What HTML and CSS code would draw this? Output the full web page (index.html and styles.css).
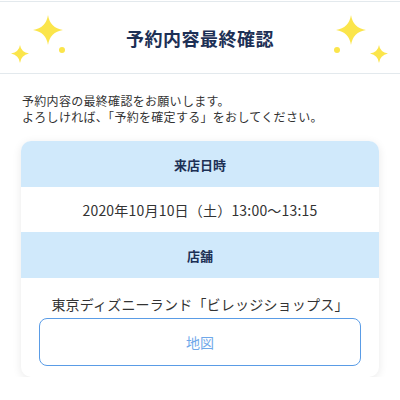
FILE: index.html
```html
<!DOCTYPE html>
<html lang="ja">
<head>
    <meta charset="UTF-8">
    <meta name="viewport" content="width=device-width, initial-scale=1.0">
    <title>予約内容最終確認</title>
    <link rel="stylesheet" href="styles.css">
</head>
<body>

    <header class="page-head">
        <!-- sparkles on the left -->
        <svg class="sparkle sparkle-left" width="80" height="70" viewBox="0 0 80 70">
            <path d="M48,13 Q50,26 63,28 Q50,30 48,43 Q46,30 33,28 Q46,26 48,13 Z"/>
            <path d="M20,43 Q21,50 29,51.5 Q21,53 20,61 Q19,53 11,51.5 Q19,50 20,43 Z"/>
            <circle cx="62" cy="48" r="3"/>
        </svg>
        <h1 class="page-title">予約内容最終確認</h1>
        <!-- sparkles on the right -->
        <svg class="sparkle sparkle-right" width="80" height="70" viewBox="0 0 80 70">
            <path d="M31,13 Q33,26 46,28 Q33,30 31,43 Q29,30 16,28 Q29,26 31,13 Z"/>
            <path d="M59,43 Q60,50 68,51.5 Q60,53 59,61 Q58,53 50,51.5 Q58,50 59,43 Z"/>
            <circle cx="17" cy="48" r="3"/>
        </svg>
    </header>

    <p class="lead">
        予約内容の最終確認をお願いします。<br>
        よろしければ、「予約を確定する」をおしてください。
    </p>

    <section class="card">
        <h2 class="card-label">来店日時</h2>
        <div class="card-value">2020年10月10日（土）13:00〜13:15</div>
        <h2 class="card-label">店舗</h2>
        <div class="card-value shop">東京ディズニーランド「ビレッジショップス」</div>
        <div class="card-actions">
            <button class="map-btn" type="button">地図</button>
        </div>
    </section>

</body>
</html>
```

FILE: styles.css
```css
body{
    margin: 0;
    background: #fff;
    font-family: "Noto Sans CJK JP", "Noto Sans", sans-serif;
    color: #333;
}

/* top title bar */
.page-head{
    position: relative;
    margin-top: 1px;
    height: 71px;
    border-top: 1px solid #e3e9ed;
    border-bottom: 1px solid #e3e9ed;
    display: flex;
    align-items: center;
    justify-content: center;
}

.page-title{
    margin: 0;
    font-size: 18px;
    font-weight: bold;
    color: #1d3055;
    letter-spacing: 0.5px;
}

.sparkle{
    position: absolute;
    top: 0;
    fill: #fbe54b;
}
.sparkle-left{
    left: 0;
}
.sparkle-right{
    right: 0;
}

.lead{
    margin: 19px 22px 0;
    font-size: 12px;
    line-height: 16px;
    letter-spacing: 0.3px;
    color: #333;
}

/* reservation card */
.card{
    margin: 16px 21px 0;
    background: #fff;
    border-radius: 10px;
    overflow: hidden;
    box-shadow: 0 2px 10px rgba(0, 0, 0, 0.09);
}

.card-label{
    margin: 0;
    height: 46px;
    display: flex;
    align-items: center;
    justify-content: center;
    background: #d0e9fb;
    font-size: 13px;
    font-weight: bold;
    color: #1d3055;
}

.card-value{
    height: 45px;
    display: flex;
    align-items: center;
    justify-content: center;
    font-size: 14px;
    letter-spacing: 0.2px;
    color: #333;
}

.card-value.shop{
    height: auto;
    padding-top: 16px;
    line-height: 20px;
}

.card-actions{
    padding: 4px 18px 11px;
}

.map-btn{
    display: block;
    width: 100%;
    height: 48px;
    background: #fff;
    border: 1px solid #5a9ce6;
    border-radius: 8px;
    font-family: inherit;
    font-size: 14px;
    color: #6fa8ea;
}
```
